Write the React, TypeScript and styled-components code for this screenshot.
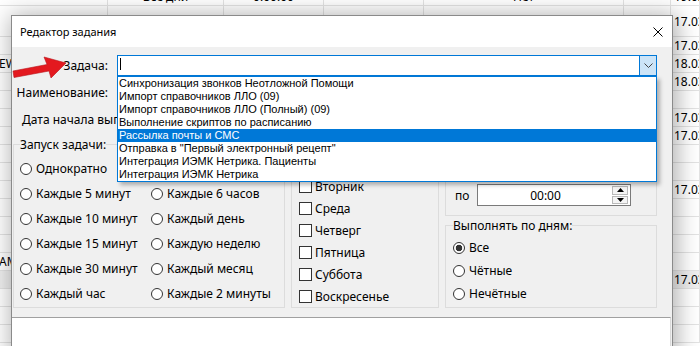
import React from 'react';
import styled, { createGlobalStyle } from 'styled-components';

const ui = `"Noto Sans", "Liberation Sans", sans-serif`;
const ms = `"Liberation Sans", Arial, sans-serif`;

const GlobalStyle = createGlobalStyle`
  html, body {
    margin: 0;
    padding: 0;
  }
  body {
    background: #fff;
    font-family: ${ui};
  }
`;

const Screen = styled.div`
  position: relative;
  width: 700px;
  height: 346px;
  overflow: hidden;
  background: #fff;
`;

/* background table behind the dialog */
const Sheet = styled.div`
  display: flex;
  flex-direction: column;
  margin-top: -12px;
`;

const SheetRow = styled.div<{ $h?: number; $shade?: boolean }>`
  display: grid;
  grid-template-columns: 108px 116px 100px 100px 200px 47px 1fr;
  height: ${(p) => p.$h ?? 18}px;
  box-sizing: border-box;
  border-bottom: 1px solid #e3e3e3;
  background: ${(p) => (p.$shade ? '#efefef' : '#fff')};
`;

const SheetCell = styled.div<{ $center?: boolean }>`
  display: flex;
  align-items: center;
  justify-content: ${(p) => (p.$center ? 'center' : 'flex-start')};
  border-right: 1px solid #e3e3e3;
  padding: 0 3px;
  font: 12px ${ui};
  color: #000;
  white-space: nowrap;
  overflow: hidden;
`;

const EdgeText = styled.span`
  margin-left: -4px;
`;

/* dialog window */
const Dialog = styled.div`
  position: absolute;
  left: 11px;
  top: 15px;
  width: 662px;
  height: 345px;
  box-sizing: border-box;
  border: 1px solid #8a8a8a;
  background: #f0f0f0;
  box-shadow: 2px 2px 22px 2px rgba(0, 0, 0, 0.32);
  display: flex;
  flex-direction: column;
`;

const TitleBar = styled.div`
  height: 31px;
  flex: none;
  background: #fff;
  display: flex;
  align-items: center;
  justify-content: space-between;
  padding: 0 9px 0 8px;
`;

const Title = styled.span`
  font: 11px ${ui};
  color: #000;
`;

const Body = styled.div`
  flex: 1;
  display: flex;
  flex-direction: column;
`;

const Form = styled.div`
  display: grid;
  grid-template-columns: 86px 1fr;
  column-gap: 9px;
  row-gap: 6px;
  padding: 8px 15px 0 10px;
`;

const FieldLabel = styled.span`
  display: flex;
  align-items: center;
  justify-content: flex-end;
  font: 12px ${ui};
  color: #000;
  white-space: nowrap;
`;

const Combo = styled.div`
  position: relative;
  height: 21px;
  box-sizing: border-box;
  border: 1px solid #0078d7;
  background: #fff;
  display: flex;
`;

const ComboText = styled.div`
  flex: 1;
  display: flex;
  align-items: center;
  padding: 0 0 3px 2px;
`;

const Caret = styled.span`
  width: 1px;
  height: 12px;
  background: #000;
`;

const DropButton = styled.div`
  width: 16px;
  background: #cce4f7;
  border-left: 1px solid #0078d7;
  display: flex;
  align-items: center;
  justify-content: center;
`;

const DropList = styled.div`
  position: absolute;
  left: -1px;
  right: -1px;
  top: calc(100% + 1px);
  z-index: 5;
  border: 1px solid #0078d7;
  background: #fff;
  box-shadow: 3px 3px 4px rgba(0, 0, 0, 0.28);
`;

const DropItem = styled.div<{ $active?: boolean }>`
  height: 13px;
  line-height: 13px;
  padding-left: 1px;
  font: 11px/13px ${ms};
  white-space: nowrap;
  color: ${(p) => (p.$active ? '#fff' : '#000')};
  background: ${(p) => (p.$active ? '#0078d7' : 'transparent')};
`;

const TextBox = styled.div`
  height: 21px;
  box-sizing: border-box;
  border: 1px solid #7a7a7a;
  background: #fff;
`;

const DateRow = styled.div`
  grid-column: 1 / -1;
  display: flex;
  align-items: center;
  gap: 10px;
  height: 21px;
`;

const DateLabel = styled(FieldLabel)`
  justify-content: flex-start;
`;

const DateBox = styled(TextBox)`
  width: 130px;
  font: 12px/19px ${ui};
  padding-left: 4px;
`;

const Panels = styled.div`
  display: grid;
  grid-template-columns: 272px 148px 212px;
  column-gap: 6px;
  margin-top: 6px;
  padding: 0 15px 0 1px;
`;

const Group = styled.fieldset<{ $pl?: number }>`
  margin: 0;
  min-width: 0;
  box-sizing: border-box;
  border: 1px solid #dcdcdc;
  padding: 0 4px 0 ${(p) => p.$pl ?? 7}px;
`;

const Legend = styled.legend`
  padding: 0;
  font: 12px/17px ${ui};
  color: #000;
`;

const RunGrid = styled.div`
  display: grid;
  grid-template-columns: 131px 1fr;
  grid-auto-rows: 25px;
  padding-top: 3px;
`;

const Option = styled.div`
  display: flex;
  align-items: center;
  gap: 4px;
  font: 12px ${ui};
  color: #000;
  white-space: nowrap;
`;

const RadioMark = styled.span<{ $on?: boolean }>`
  flex: none;
  width: 12px;
  height: 12px;
  box-sizing: border-box;
  border: 1px solid #333;
  border-radius: 50%;
  background: ${(p) =>
    p.$on ? 'radial-gradient(circle, #333 0 3px, #fff 3.6px)' : '#fff'};
`;

const CheckMark = styled.span`
  flex: none;
  width: 13px;
  height: 13px;
  box-sizing: border-box;
  border: 1px solid #333;
  background: #fff;
`;

const DayList = styled.div<{ $row: number; $top?: number }>`
  display: grid;
  grid-auto-rows: ${(p) => p.$row}px;
  padding-top: ${(p) => p.$top ?? 0}px;
`;

const CheckOption = styled(Option)`
  gap: 3px;
`;

const RightColumn = styled.div`
  display: flex;
  flex-direction: column;
  gap: 1px;
`;

const TimeGroup = styled(Group)`
  padding: 5px 0 9px 9px;
`;

const TimeRows = styled.div`
  display: grid;
  grid-template-columns: 22px 154px;
  grid-auto-rows: 22px;
  row-gap: 4px;
`;

const TimeLabel = styled.span`
  display: flex;
  align-items: center;
  font: 12px ${ui};
  color: #000;
`;

const TimeBox = styled.div`
  display: flex;
  box-sizing: border-box;
  border: 1px solid #7a7a7a;
  background: #fff;
  padding: 1px;
`;

const TimeValue = styled.span`
  flex: 1;
  display: flex;
  align-items: center;
  justify-content: center;
  font: 12px ${ui};
  color: #000;
`;

const Spinner = styled.div`
  width: 16px;
  display: flex;
  flex-direction: column;
  gap: 1px;
  margin-right: 1px;
`;

const SpinButton = styled.div`
  flex: 1;
  box-sizing: border-box;
  border: 1px solid #b9b9b9;
  background: #f4f4f4;
  display: flex;
  align-items: center;
  justify-content: center;
`;

const DaysGroup = styled(Group)`
  flex: 1;
`;

const BottomPanel = styled.div`
  flex: 1;
  margin-top: 9px;
  background: #fff;
  border-top: 1px solid #a0a0a0;
  border-right: 1px solid #d9d9d9;
  margin-right: 1px;
`;

const Pointer = styled.svg`
  position: absolute;
  left: 0;
  top: 50px;
  z-index: 10;
`;

const tasks = [
  'Синхронизация звонков Неотложной Помощи',
  'Импорт справочников ЛЛО (09)',
  'Импорт справочников ЛЛО (Полный) (09)',
  'Выполнение скриптов по расписанию',
  'Рассылка почты и СМС',
  'Отправка в "Первый электронный рецепт"',
  'Интеграция ИЭМК Нетрика. Пациенты',
  'Интеграция ИЭМК Нетрика',
];

const runOptions = [
  'Однократно',
  'Каждые 3 часа',
  'Каждые 5 минут',
  'Каждые 6 часов',
  'Каждые 10 минут',
  'Каждый день',
  'Каждые 15 минут',
  'Каждую неделю',
  'Каждые 30 минут',
  'Каждый месяц',
  'Каждый час',
  'Каждые 2 минуты',
];

const weekDays = ['Понедельник', 'Вторник', 'Среда', 'Четверг', 'Пятница', 'Суббота', 'Воскресенье'];

// rows of the table behind: [left text, date on the right, shaded]
const sheetRows: [string, string, boolean][] = [
  ['', '17.03.2021', false],
  ['EW_OMS', '18.03.2021', false],
  ['', '18.03.2021', false],
  ['', '', false],
  ['', '17.03.2021', false],
  ['', '17.03.2021', false],
  ['', '', false],
  ['', '', false],
  ['', '17.03.2021', false],
  ['', '', false],
  ['', '', false],
  ['', '', false],
  ['AMI_SYNC', '', false],
  ['', '17.03.2021', true],
  ['', '', false],
  ['', '', false],
  ['', '', false],
];

const Arrow = ({ up }: { up?: boolean }) => (
  <svg width="7" height="4" viewBox="0 0 7 4">
    <path d={up ? 'M0 4 L3.5 0 L7 4 Z' : 'M0 0 L3.5 4 L7 0 Z'} fill="#000" />
  </svg>
);

const Spin = () => (
  <Spinner>
    <SpinButton>
      <Arrow up />
    </SpinButton>
    <SpinButton>
      <Arrow />
    </SpinButton>
  </Spinner>
);

export default function App() {
  return (
    <>
      <GlobalStyle />
      <Screen>
        <Sheet>
          <SheetRow>
            <SheetCell />
            <SheetCell $center>Все дни</SheetCell>
            <SheetCell $center>0:00:00</SheetCell>
            <SheetCell />
            <SheetCell $center>Нет</SheetCell>
            <SheetCell />
            <SheetCell>19.03.2021</SheetCell>
          </SheetRow>
          <SheetRow $h={31}>
            <SheetCell />
            <SheetCell />
            <SheetCell />
            <SheetCell />
            <SheetCell />
            <SheetCell />
            <SheetCell>17.03.2021</SheetCell>
          </SheetRow>
          {sheetRows.map(([left, date, shade], i) => (
            <SheetRow key={i} $shade={shade}>
              <SheetCell>{left && <EdgeText>{left}</EdgeText>}</SheetCell>
              <SheetCell />
              <SheetCell />
              <SheetCell />
              <SheetCell />
              <SheetCell />
              <SheetCell>{date}</SheetCell>
            </SheetRow>
          ))}
        </Sheet>

        <Dialog>
          <TitleBar>
            <Title>Редактор задания</Title>
            <svg width="10" height="10" viewBox="0 0 10 10">
              <path d="M0.5 0.5 L9.5 9.5 M9.5 0.5 L0.5 9.5" stroke="#000" strokeWidth="1" />
            </svg>
          </TitleBar>
          <Body>
            <Form>
              <FieldLabel>Задача:</FieldLabel>
              <Combo>
                <ComboText>
                  <Caret />
                </ComboText>
                <DropButton>
                  <svg width="9" height="5" viewBox="0 0 9 5">
                    <path d="M0.5 0.5 L4.5 4.5 L8.5 0.5" fill="none" stroke="#444" strokeWidth="1" />
                  </svg>
                </DropButton>
                <DropList>
                  {tasks.map((t, i) => (
                    <DropItem key={t} $active={i === 4}>
                      {t}
                    </DropItem>
                  ))}
                </DropList>
              </Combo>
              <FieldLabel>Наименование:</FieldLabel>
              <TextBox />
              <DateRow>
                <DateLabel>Дата начала выполнения:</DateLabel>
                <DateBox>17.03.2021</DateBox>
              </DateRow>
            </Form>

            <Panels>
              <Group $pl={6}>
                <Legend>Запуск задачи:</Legend>
                <RunGrid>
                  {runOptions.map((o) => (
                    <Option key={o}>
                      <RadioMark />
                      {o}
                    </Option>
                  ))}
                </RunGrid>
              </Group>

              <Group>
                <Legend>Дни недели:</Legend>
                <DayList $row={22}>
                  {weekDays.map((d) => (
                    <CheckOption key={d}>
                      <CheckMark />
                      {d}
                    </CheckOption>
                  ))}
                </DayList>
              </Group>

              <RightColumn>
                <TimeGroup>
                  <Legend>Время выполнения:</Legend>
                  <TimeRows>
                    <TimeLabel>с</TimeLabel>
                    <TimeBox>
                      <TimeValue>00:00</TimeValue>
                      <Spin />
                    </TimeBox>
                    <TimeLabel>по</TimeLabel>
                    <TimeBox>
                      <TimeValue>00:00</TimeValue>
                      <Spin />
                    </TimeBox>
                  </TimeRows>
                </TimeGroup>
                <DaysGroup>
                  <Legend>Выполнять по дням:</Legend>
                  <DayList $row={23} $top={2}>
                    <Option>
                      <RadioMark $on />
                      Все
                    </Option>
                    <Option>
                      <RadioMark />
                      Чётные
                    </Option>
                    <Option>
                      <RadioMark />
                      Нечётные
                    </Option>
                  </DayList>
                </DaysGroup>
              </RightColumn>
            </Panels>

            <BottomPanel />
          </Body>
        </Dialog>

        <Pointer width="70" height="34" viewBox="0 0 70 34">
          <polygon
            points="13,21 47,14.5 44,7 66,13 51,28 49,21 14,27.5"
            fill="#e3191f"
            stroke="#b8121a"
            strokeWidth="0.6"
            strokeLinejoin="round"
          />
        </Pointer>
      </Screen>
    </>
  );
}
